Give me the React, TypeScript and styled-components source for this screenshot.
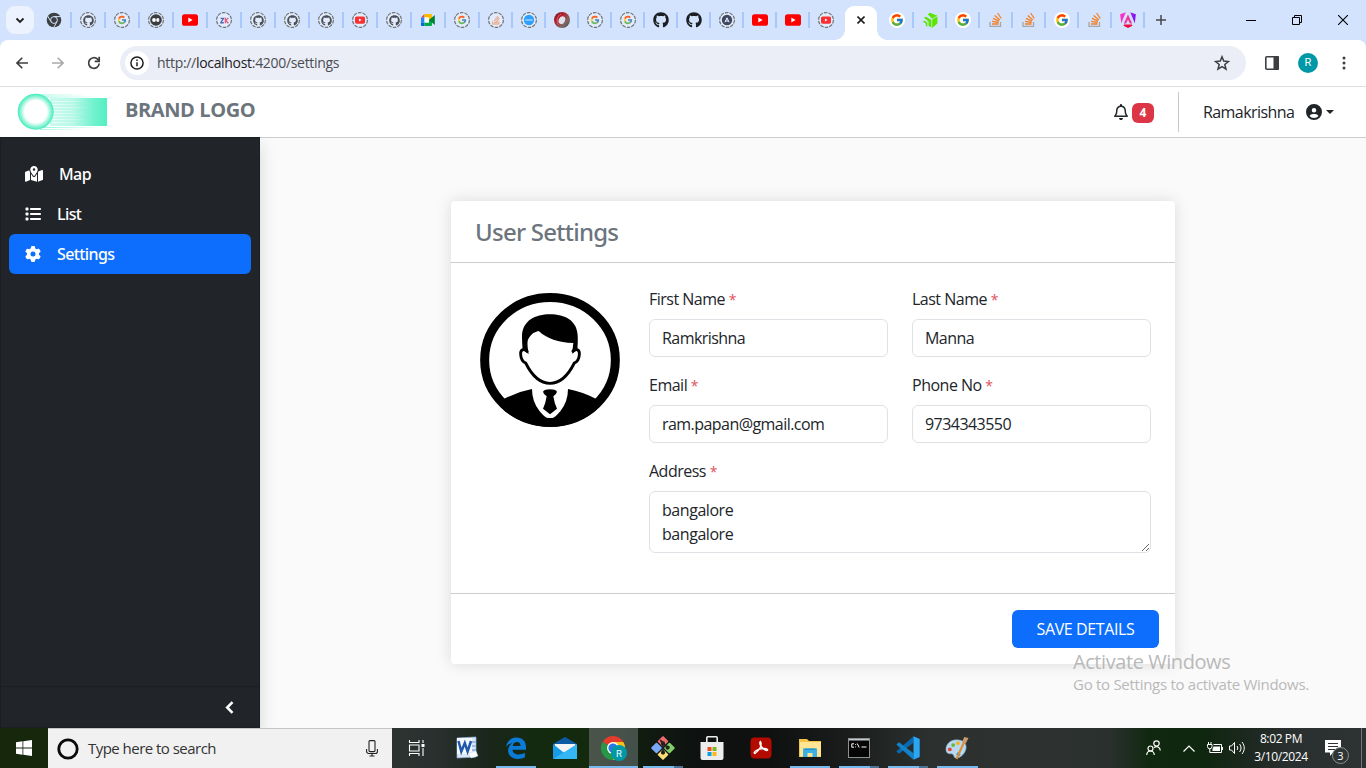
import React from 'react';
import styled, { createGlobalStyle } from 'styled-components';
import {
  FaMapLocationDot, FaList, FaGear, FaRegBell, FaCircleUser,
  FaGithub, FaStackOverflow,
} from 'react-icons/fa6';
import { FcGoogle } from 'react-icons/fc';

const GlobalStyle = createGlobalStyle`
  *, *::before, *::after { box-sizing: border-box; }
  html, body { margin: 0; padding: 0; }
  body {
    width: 1366px; height: 768px; overflow: hidden;
    font-family: "Open Sans", "Noto Sans", sans-serif;
    font-size: 16px; line-height: 24px; color: #212529; background: #fff;
  }
  svg { display: block; flex: none; }
`;

const Screen = styled.div`
  width: 1366px; height: 768px; display: flex; flex-direction: column; overflow: hidden;
`;

/* ---------- browser chrome ---------- */
const TabStrip = styled.div`
  height: 40px; flex: none; display: flex; align-items: center; background: #d3e3fd;
`;
const TabSearch = styled.div`
  width: 28px; height: 28px; margin: 0 4px 0 6px; border-radius: 9px; background: #ecf3fe;
  display: grid; place-items: center;
`;
const Tab = styled.div<{ $w: number; $line?: boolean }>`
  width: ${p => p.$w}px; height: 16px; display: flex; align-items: center; justify-content: center;
  border-right: 2px solid ${p => (p.$line ? '#a8c7fa' : 'transparent')};
`;
const ActiveTab = styled.div`
  width: 32px; height: 34px; margin: 0 4px 0 2px; align-self: flex-end; background: #fff;
  border-radius: 9px 9px 0 0; display: grid; place-items: center; padding-bottom: 6px; position: relative;
  &::before, &::after {
    content: ''; position: absolute; bottom: 0; width: 10px; height: 10px;
  }
  &::before { left: -10px; background: radial-gradient(circle at 0 0, transparent 9.5px, #fff 10px); }
  &::after { right: -10px; background: radial-gradient(circle at 100% 0, transparent 9.5px, #fff 10px); }
`;
const NewTab = styled.div`
  width: 32px; display: grid; place-items: center;
`;
const WindowButtons = styled.div`
  margin-left: auto; display: flex;
  > span { width: 46px; display: grid; place-items: center; }
`;
const ToolbarBack = styled.div`
  height: 47px; flex: none; background: #d3e3fd;
`;
const Toolbar = styled.div`
  height: 47px; background: #fff; border-radius: 8px 8px 0 0; border-bottom: 1px solid #dedfe1;
  display: flex; align-items: center; padding-left: 4px; overflow: hidden;
`;
const ToolButton = styled.div<{ $w?: number }>`
  width: ${p => p.$w ?? 36}px; height: 34px; flex: none; display: grid; place-items: center;
`;
const AddressBar = styled.div`
  width: 1126px; height: 34px; flex: none; margin-left: 8px; border-radius: 17px; background: #ebeef7;
  display: flex; align-items: center; padding: 0 12px 0 5px;
`;
const SiteInfo = styled.div`
  width: 24px; height: 24px; border-radius: 50%; background: #fff; display: grid; place-items: center;
`;
const Url = styled.div`
  margin-left: 8px; flex: 1; font-size: 14px; line-height: 20px; letter-spacing: -0.31px; color: #4a4d52;
  span { color: #202124; }
`;
const Profile = styled.div`
  width: 20px; height: 20px; border-radius: 50%; background: #0097a7; color: #fff;
  font: 11px/20px "Roboto", sans-serif; text-align: center;
`;

/* ---------- page header ---------- */
const Header = styled.header`
  height: 51px; flex: none; background: #fff; border-bottom: 1px solid #ccc;
  display: flex; align-items: center; padding: 0 32px 0 16px;
`;
const Brand = styled.div`
  margin: -4px 0 0 17px; font-size: 20px; font-weight: 700; color: #6c757d; letter-spacing: -0.4px;
`;
const Alerts = styled.div`
  margin-left: auto; display: flex; align-items: center; gap: 3px; padding-right: 24px; height: 40px;
  border-right: 1px solid #c8c8c8;
`;
const Badge = styled.span`
  width: 22px; height: 20px; border-radius: 6px; background: #dc3545; color: #fff; margin-top: 1px;
  font-size: 12px; line-height: 20px; font-weight: 700; text-align: center;
`;
const UserMenu = styled.div`
  display: flex; align-items: center; padding-left: 24px; height: 40px;
  span { width: 103px; letter-spacing: -0.58px; }
`;
const Caret = styled.i`
  margin-left: 4px; border: 4.5px solid transparent; border-top-color: #212529; border-bottom: 0;
`;

/* ---------- sidebar ---------- */
const Body = styled.div`
  height: 590px; flex: none; display: flex; background: #fafafa;
`;
const Sidebar = styled.aside`
  width: 260px; margin-top: -1px; background: #212529; border: 1px solid #1b1e22; color: #fff;
  box-shadow: 0 8px 16px rgba(0,0,0,.15); display: flex; flex-direction: column; z-index: 1;
  clip-path: inset(0 -30px 0 0);
`;
const Nav = styled.nav`
  flex: 1; padding: 16px 8px;
`;
const NavItem = styled.div<{ $active?: boolean; $gap: number }>`
  height: 40px; border-radius: 6px; padding: 0 16px; display: flex; align-items: center; gap: ${p => p.$gap}px;
  font-family: "Noto Sans", "Open Sans", sans-serif; font-weight: 500; letter-spacing: -0.6px;
  background: ${p => (p.$active ? '#0d6efd' : 'transparent')};
`;
const Collapse = styled.div`
  height: 41px; border-top: 1px solid #1a1d21; display: flex; align-items: center; justify-content: flex-end;
  padding-right: 25px;
`;

/* ---------- settings card ---------- */
const Main = styled.main`
  flex: 1; display: flex; justify-content: center; align-items: flex-start; padding-top: 63px;
`;
const Card = styled.section`
  width: 724px; background: #fff; border-radius: 4px; box-shadow: 0 0 16px rgba(0,0,0,.13);
`;
const CardHeader = styled.h4`
  margin: 0; height: 62px; border-bottom: 1px solid #ccc; padding: 0 24px; display: flex; align-items: center;
  font-family: "Noto Sans", "Open Sans", sans-serif; font-size: 24px; font-weight: 500; color: #6c757d;
  letter-spacing: -0.75px;
`;
const CardBody = styled.div`
  padding: 24px 24px 40px 29px; display: flex; gap: 29px;
  > svg { margin-top: 6px; }
`;
const Form = styled.form`
  flex: 1; display: grid; grid-template-columns: 1fr 1fr; gap: 16px 24px;
`;
const Field = styled.label<{ $wide?: boolean }>`
  display: flex; flex-direction: column; gap: 8px; grid-column: ${p => (p.$wide ? '1 / -1' : 'auto')};
  > span { height: 24px; letter-spacing: -0.5px; }
  i { font-style: normal; font-size: 14px; line-height: 1; color: #e0505e; }
`;
const controlStyle = `
  width: 100%; border: 1px solid #dee2e6; border-radius: 6px; background: #fff; padding: 6px 12px;
  font: inherit; color: #212529; outline: none; letter-spacing: -0.55px; display: block;
`;
const Input = styled.input`${controlStyle} height: 38px;`;
const TextArea = styled.textarea`${controlStyle} height: 62px; overflow: hidden; letter-spacing: -0.45px;`;
const CardFooter = styled.div`
  height: 71px; border-top: 1px solid #ccc; padding: 16px; display: flex; justify-content: flex-end;
`;
const SaveButton = styled.button`
  width: 147px; height: 38px; border: 0; border-radius: 6px; background: #0d6efd; color: #fff; padding: 0;
  font: inherit; letter-spacing: -0.38px;
`;

const Watermark = styled.div`
  position: absolute; left: 1073px; top: 649px; color: #b9b9b9; z-index: 5; white-space: nowrap;
`;
const WatermarkTitle = styled.div`font-size: 20px; line-height: 25px; letter-spacing: -0.43px;`;
const WatermarkText = styled.div`font-size: 15px; line-height: 20px; letter-spacing: -0.28px;`;

/* ---------- taskbar ---------- */
const Taskbar = styled.div`
  height: 40px; flex: none; display: flex; color: #fff;
  background: linear-gradient(90deg, #16270c 0, #16270c 48px, #2c3331 392px, #2a302f 435px, #19261a 490px,
    #142a10 540px, #132a0e 590px, #111a10 650px, #0e1110 700px, #0e1110 770px, #1a1d1c 850px, #2c3130 930px,
    #2d3231 1060px, #2a302e 1110px, #10280f 1150px, #0f260f 1205px, #1d2820 1250px, #2a302f 1290px, #2d3232 1366px);
`;
const Start = styled.div`width: 48px; display: grid; place-items: center;`;
const Search = styled.div`
  width: 344px; background: #f1f1f1; border-top: 1px solid #c4c4c4; display: flex; align-items: center;
  padding: 0 14px 0 9px; color: #333; font-size: 15px;
  span { flex: 1; margin: -1px 0 0 9px; letter-spacing: -0.53px; }
`;
const TaskView = styled.div`width: 48px; margin-right: 2px; display: grid; place-items: center;`;
const AppButton = styled.div<{ $on?: boolean }>`
  width: 49.1px; height: 40px; position: relative; display: grid; place-items: center;
  background: ${p => (p.$on ? 'linear-gradient(90deg, #4a544a, #43504a)' : 'transparent')};
`;
const Running = styled.div<{ $kind: 'one' | 'many' | 'full' }>`
  position: absolute; bottom: 0; height: 2px;
  left: ${p => (p.$kind === 'full' ? 0 : 4.5)}px; right: ${p => (p.$kind === 'full' ? 0 : 4.5)}px;
  background: ${p => (p.$kind === 'many' ? 'linear-gradient(90deg, #76b9ed 31px, #4a7394 31px)' : '#76b9ed')};
`;
const Tray = styled.div`
  margin-left: auto; display: flex; align-items: center; padding-right: 4px;
`;
const TrayIcon = styled.div<{ $w: number }>`width: ${p => p.$w}px; display: grid; place-items: center;`;
const Clock = styled.div`
  width: 52px; display: flex; flex-direction: column; align-items: center; white-space: nowrap;
  font-size: 12px; line-height: 18px; letter-spacing: -0.38px;
`;
const ShowDesktop = styled.div`width: 1px; height: 40px; margin-left: 2px; background: #707473;`;
const Notice = styled.div`
  width: 52px; height: 40px; position: relative; display: grid; place-items: center;
`;
const NoticeCount = styled.span`
  position: absolute; left: 25px; top: 19px; width: 17px; height: 17px; border-radius: 50%;
  background: #2f3434; border: 1px solid #8b8f8f; font-size: 11px; line-height: 15px; text-align: center;
`;

/* ---------- favicons ---------- */
type Kind = 'chrome' | 'gh' | 'dgh' | 'dg' | 'ddots' | 'yt' | 'dzk' | 'dyt' | 'meet' | 'dso' | 'dblue'
  | 'red' | 'g' | 'da' | 'green' | 'so' | 'ng';

const YouTube = ({ s = 16 }: { s?: number }) => (
  <svg width={s} height={s} viewBox="0 0 16 16">
    <rect x="0" y="2.2" width="16" height="11.6" rx="2.6" fill="#f00" />
    <path d="M6.3 5.6v4.8L10.6 8z" fill="#fff" />
  </svg>
);
const Ringed = ({ children }: { children: React.ReactNode }) => (
  <RingBox>
    <svg width="16" height="16" viewBox="0 0 16 16">
      <circle cx="8" cy="8" r="7.4" fill="#e3ecfc" stroke="#6f7475" strokeWidth="1.200" strokeDasharray="3.6 1.05" />
    </svg>
    <RingInner>{children}</RingInner>
  </RingBox>
);
const RingBox = styled.div`width: 16px; height: 16px; display: grid; > * { grid-area: 1 / 1; }`;
const RingInner = styled.div`display: grid; place-items: center; opacity: .8;`;
const White = styled.div`
  width: 16px; height: 16px; border-radius: 50%; background: #fff; display: grid; place-items: center;
`;

const Favicon = ({ kind }: { kind: Kind }) => {
  switch (kind) {
    case 'chrome':
      return (
        <svg width="16" height="16" viewBox="0 0 16 16">
          <circle cx="8" cy="8" r="7.3" fill="#3c4043" />
          <g stroke="#d3e3fd" strokeWidth="1" fill="none">
            <circle cx="8" cy="8" r="3.4" />
            <path d="M8 4.6h7M5 9.7L1.6 4M11 9.7L7.6 15.6" />
          </g>
          <circle cx="8" cy="8" r="2.2" fill="#3c4043" />
        </svg>
      );
    case 'gh': return <FaGithub size={16} color="#1b1f24" />;
    case 'dgh': return <Ringed><FaGithub size={11} color="#24292f" /></Ringed>;
    case 'dg': return <Ringed><FcGoogle size={10} /></Ringed>;
    case 'ddots':
      return (
        <Ringed>
          <svg width="12" height="12" viewBox="0 0 12 12">
            <circle cx="6" cy="6" r="5.8" fill="#111" />
            <circle cx="4" cy="6" r="1.9" fill="#fff" /><ellipse cx="7.8" cy="6" rx="1.600" ry="1.900" fill="#fff" />
          </svg>
        </Ringed>
      );
    case 'yt': return <YouTube />;
    case 'dyt': return <Ringed><YouTube s={10} /></Ringed>;
    case 'dzk':
      return (
        <Ringed>
          <svg width="9" height="7" viewBox="0 0 10 8" fill="none" strokeWidth="1.500">
            <path d="M.5 1.500h3.400L.8 6.600h3.400" stroke="#2947a3" />
            <path d="M6 .8v6.400M9.400 1L6.400 4l3 3.200" stroke="#e8365d" />
          </svg>
        </Ringed>
      );
    case 'meet':
      return (
        <svg width="16" height="16" viewBox="0 0 16 16">
          <path d="M1 5.500L4.500 2v3.500z" fill="#ea4335" />
          <path d="M1 5.500h3.500v5H1z" fill="#2684fc" />
          <path d="M1 10.500h3.500V14H2a1 1 0 01-1-1z" fill="#0066da" />
          <path d="M4.500 2h6.500a1 1 0 011 1v4L9 8.500V5.500H4.500z" fill="#ffba00" />
          <path d="M4.500 10.500H9V8l3-1v6a1 1 0 01-1 1H4.500z" fill="#00ac47" />
          <path d="M9 8l5.800-5v10z" fill="#00832d" />
          <path d="M4.500 5.500H9v5H4.500z" fill="#fff" />
        </svg>
      );
    case 'dso': return <Ringed><FaStackOverflow size={10} color="#f0803c" /></Ringed>;
    case 'dblue':
      return (
        <Ringed>
          <svg width="12" height="12" viewBox="0 0 12 12">
            <circle cx="6" cy="6" r="5.200" fill="#008cff" /><path d="M2.200 6h7.600" stroke="#a6d4ff" strokeWidth="1.300" />
          </svg>
        </Ringed>
      );
    case 'red':
      return (
        <svg width="16" height="16" viewBox="0 0 16 16">
          <defs><linearGradient id="redring" x1="0" y1="0" x2="1" y2="1">
            <stop offset="0" stopColor="#5e1420" /><stop offset=".35" stopColor="#b8202f" />
            <stop offset=".7" stopColor="#7d6a66" /><stop offset="1" stopColor="#3d3d3b" />
          </linearGradient></defs>
          <circle cx="8" cy="8" r="8" fill="url(#redring)" />
          <ellipse cx="8" cy="8.200" rx="3.100" ry="4" fill="#dfe3ef" transform="rotate(25 8 8)" />
          <path d="M4.500 12.500C2 9 3 4 7 2" fill="none" stroke="#e0606c" strokeWidth="1" />
        </svg>
      );
    case 'g': return <White><FcGoogle size={14} /></White>;
    case 'da':
      return (
        <Ringed>
          <svg width="12" height="12" viewBox="0 0 12 12">
            <circle cx="6" cy="6" r="5.200" fill="#14203c" />
            <path d="M4 8.200L6 3.800l2 4.400M4.900 7h2.200" fill="none" stroke="#fff" strokeWidth="1" />
          </svg>
        </Ringed>
      );
    case 'green':
      return (
        <svg width="16" height="16" viewBox="0 0 16 16" fill="#5ce500">
          <path d="M5.800 2.200L8 .8l7.400 3v7.800L10.200 16V7.600z" />
          <path d="M1.800 5.800L4 4.800l5.400 3.200v7.600l-3.200-1.800V9.800z" />
          <path d="M.6 9.600l2-.8 3 1.800v4.200l-1.800-1V11.600z" />
          <path d="M5.200 2.600l5 4.600 5.200-3.200M1.800 6.200l4.200 3.200v5" fill="none" stroke="#d3e3fd" strokeWidth=".8" />
        </svg>
      );
    case 'so':
      return (
        <svg width="14" height="16" viewBox="0 0 14 16" fill="none">
          <path d="M1 10v4.300h10.500V10" stroke="#a5a7aa" strokeWidth="1.300" />
          <g stroke="#f48024" strokeWidth="1.300">
            <path d="M3 12h6.500M3.100 9.300l6.500 1.200M4 6.300l6 2.900M5.700 3.600l5.100 4.300M8.600 1l3.700 5.500" />
          </g>
        </svg>
      );
    case 'ng':
      return (
        <svg width="16" height="16" viewBox="0 0 16 16">
          <defs><linearGradient id="nggrad" x1="0" y1="0" x2="1" y2="0">
            <stop offset="0" stopColor="#fb2cc0" /><stop offset=".35" stopColor="#f637d8" /><stop offset="1" stopColor="#6a0dff" />
          </linearGradient></defs>
          <path d="M5.800.3L1.200 11.300.2 2.300zM10.200.3l5.600 2-1 9z" fill="url(#nggrad)" />
          <path d="M8 2.600l4.200 9H9.800L8 7.400 6.200 11.600H3.800z" fill="#f5359f" />
          <path d="M4 12.400h8l.4 1.400L8 16l-4.400-2.200z" fill="#f0063c" />
        </svg>
      );
  }
};

const firstTabs: Kind[] = ['chrome', 'dgh', 'dg', 'ddots', 'yt', 'dzk', 'dgh', 'dgh', 'dgh', 'dyt', 'dgh', 'meet', 'dg'];
const middleTabs: Kind[] = ['dso', 'dblue', 'red', 'dg', 'dg', 'gh', 'gh', 'da', 'yt', 'yt', 'dyt'];
const lastTabs: Kind[] = ['g', 'green', 'g', 'so', 'so', 'g', 'so', 'ng'];

const Browser = () => (
  <>
    <TabStrip>
      <TabSearch>
        <svg width="10" height="7" viewBox="0 0 10 7"><path d="M1.500 1.500L5 5l3.500-3.500" fill="none" stroke="#1f1f1f" strokeWidth="1.800" /></svg>
      </TabSearch>
      {firstTabs.map((k, i) => <Tab key={i} $w={34} $line><Favicon kind={k} /></Tab>)}
      {middleTabs.map((k, i) => <Tab key={i} $w={33} $line={i < 10}><Favicon kind={k} /></Tab>)}
      <ActiveTab>
        <svg width="8" height="8" viewBox="0 0 8 8"><path d="M.5.5l7 7M7.500.5l-7 7" stroke="#1f1f1f" strokeWidth="1.600" /></svg>
      </ActiveTab>
      {lastTabs.map((k, i) => <Tab key={i} $w={33} $line><Favicon kind={k} /></Tab>)}
      <NewTab>
        <svg width="10" height="10" viewBox="0 0 10 10"><path d="M5 0v10M0 5h10" stroke="#474747" strokeWidth="1.500" /></svg>
      </NewTab>
      <WindowButtons>
        <span><svg width="10" height="10" viewBox="0 0 10 10"><path d="M0 5.500h10" stroke="#000" /></svg></span>
        <span><svg width="10" height="10" viewBox="0 0 10 10" fill="none" stroke="#000"><path d="M.5 2.500h7v7h-7zM2.500 2.500v-2h7v7h-2" /></svg></span>
        <span><svg width="10" height="10" viewBox="0 0 10 10"><path d="M0 0l10 10M10 0L0 10" stroke="#000" strokeWidth="1.100" /></svg></span>
      </WindowButtons>
    </TabStrip>
    <ToolbarBack>
      <Toolbar>
        <ToolButton>
          <svg width="12" height="12" viewBox="0 0 12 12" fill="none" stroke="#3c3f41" strokeWidth="1.600"><path d="M12 6H1.200M6.300.7L1 6l5.300 5.300" /></svg>
        </ToolButton>
        <ToolButton>
          <svg width="12" height="12" viewBox="0 0 12 12" fill="none" stroke="#a9a9ab" strokeWidth="1.600"><path d="M0 6h10.800M5.700.7L11 6l-5.300 5.300" /></svg>
        </ToolButton>
        <ToolButton>
          <svg width="14" height="14" viewBox="0 0 14 14" fill="none" stroke="#3c3f41" strokeWidth="1.700"><path d="M12.200 7.500A5.300 5.300 0 1110.600 3.200L12 4.700" /><path d="M12.200.8v4.500H7.700" /></svg>
        </ToolButton>
        <AddressBar>
          <SiteInfo>
            <svg width="14" height="14" viewBox="0 0 14 14" fill="none" stroke="#1f1f1f" strokeWidth="1.500"><circle cx="7" cy="7" r="6.100" /><path d="M7 6.300v4M7 3.500v1.500" /></svg>
          </SiteInfo>
          <Url>http://<span>localhost</span>:4200/settings</Url>
          <ToolButton $w={24}>
            <svg width="16" height="16" viewBox="0 0 16 16" fill="none" stroke="#3c3f41" strokeWidth="1.500"><path d="M8 1.800l1.700 4.300 4.700.4-3.600 3 1.200 4.600L8 11.600l-4 2.500 1.200-4.600-3.600-3 4.700-.4z" /></svg>
          </ToolButton>
        </AddressBar>
        <ToolButton $w={52}>
          <svg width="14" height="14" viewBox="0 0 14 14"><rect x=".8" y=".8" width="12.400" height="12.400" rx="1" fill="none" stroke="#3c3f41" strokeWidth="1.600" /><path d="M8.500 0H13a1 1 0 011 1v12a1 1 0 01-1 1H8.500z" fill="#3c3f41" /></svg>
        </ToolButton>
        <ToolButton $w={20}><Profile>R</Profile></ToolButton>
        <ToolButton $w={52}>
          <svg width="4" height="14" viewBox="0 0 4 14" fill="#3c3f41"><circle cx="2" cy="2" r="1.500" /><circle cx="2" cy="7" r="1.500" /><circle cx="2" cy="12" r="1.500" /></svg>
        </ToolButton>
      </Toolbar>
    </ToolbarBack>
  </>
);

const Logo = () => (
  <svg width="92" height="38" viewBox="0 0 92 38">
    <defs>
      <linearGradient id="trail" x1="0" x2="1" y1="0" y2="0">
        <stop offset="0" stopColor="#52efc3" stopOpacity=".3" /><stop offset=".4" stopColor="#52efc3" stopOpacity=".42" />
        <stop offset=".75" stopColor="#52efc3" stopOpacity=".8" /><stop offset="1" stopColor="#52efc3" />
      </linearGradient>
      <linearGradient id="streak" x1="0" x2="1" y1="0" y2="0">
        <stop offset="0" stopColor="#52efc3" stopOpacity=".6" /><stop offset="1" stopColor="#52efc3" stopOpacity="0" />
      </linearGradient>
      <linearGradient id="gap" x1="0" x2="1" y1="0" y2="0">
        <stop offset="0" stopColor="#fff" stopOpacity=".7" /><stop offset="1" stopColor="#fff" stopOpacity="0" />
      </linearGradient>
      <radialGradient id="ring">
        <stop offset=".62" stopColor="#fff" /><stop offset=".8" stopColor="#a4f5dd" /><stop offset=".97" stopColor="#4beebf" />
      </radialGradient>
    </defs>
    <rect x="34" y="5" width="57" height="28" fill="url(#trail)" />
    <g fill="url(#streak)">
      <rect x="24" y="1.500" width="50" height="1" /><rect x="28" y="3.500" width="60" height="1" />
      <rect x="26" y="34" width="60" height="1" /><rect x="24" y="36" width="46" height=".8" />
    </g>
    <g fill="url(#gap)">
      <rect x="36" y="8" width="36" height="1" /><rect x="36" y="11" width="30" height="1" />
      <rect x="36" y="14" width="38" height="1" /><rect x="36" y="17" width="26" height="1" />
      <rect x="36" y="20" width="34" height="1" /><rect x="36" y="23" width="30" height="1" />
      <rect x="36" y="26" width="36" height="1" /><rect x="36" y="29" width="30" height="1" />
    </g>
    <circle cx="19.700" cy="18.700" r="18" fill="url(#ring)" />
  </svg>
);

const Avatar = () => (
  <svg width="140" height="134" viewBox="120 309 420 402">
    <defs><clipPath id="disc"><ellipse cx="330" cy="510" rx="209" ry="200" /></clipPath></defs>
    <ellipse cx="330" cy="510" rx="196" ry="187.500" fill="#fff" stroke="#000" strokeWidth="27" />
    <path clipPath="url(#disc)" d="M190 628Q232 605 276 597Q276 635 299 664Q318 687 330 687Q342 687 361 664Q384 635 384 597Q428 605 470 628V711H190Z" />
    <path d="M309 605Q314 598 330 598Q346 598 351 605Q349 614 340 619Q343 640 351 656L330 673L309 656Q317 640 320 619Q311 614 309 605Z" />
    <path d="M263 486C256 474 240 477 242 494C243 508 249 516 257 519C274 553 297 580 330 580C363 580 386 553 403 519C411 516 417 508 418 494C420 477 404 474 397 486" fill="none" stroke="#000" strokeWidth="8.500" />
    <path d="M248 480C247 466 246 452 246 436C249 392 285 373 330 373C375 373 411 392 413 436C414 452 413 466 412 480L396 491L400 459C355 458 321 446 296 423C281 425 268 438 263 452C261 464 264 478 266 492Z" />
  </svg>
);

/* ---------- taskbar drawings ---------- */
const WordIcon = () => (
  <svg width="24" height="24" viewBox="0 0 24 24">
    <path d="M2 2L21 1v20L2 22z" fill="#dce8f8" stroke="#8fb0df" strokeWidth=".7" />
    <path d="M17 5h4v2h-4zM17 9h4v2h-4zM17 13h4v2h-4z" fill="#9dbbe6" /><path d="M2 2h15v16H2z" fill="#f4f8fd" />
    <path d="M3.500 5l2.800 10.500L9.800 7l2.800 8.500L16 5" fill="none" stroke="#1f5aad" strokeWidth="2.500" />
    <path d="M13.500 17.500l7.500-2.500 2 5-7 2z" fill="#fff" stroke="#b9cdea" strokeWidth=".4" />
  </svg>
);
const EdgeIcon = () => (
  <svg width="22" height="22" viewBox="0 0 22 22">
    <path d="M1 9.700C2.200 3.800 6.500.6 11.500.6c6 0 9.500 4.200 9.500 9.300v2.800H7.500c.2 3.300 3 4.700 6.200 4.700 2.300 0 4.300-.6 6.200-1.700v4.600c-2 1.100-4.600 1.600-7.200 1.600-5.600 0-9.600-3.300-9.600-8.300 0-3.200 1.600-6 4.600-7.600C5.400 6.500 2.800 7.400 1 9.700zm6.700-.7h7.800c.2-2.500-1.200-4-3.600-4-2.200 0-3.800 1.500-4.200 4z" fill="#0b7bd8" />
  </svg>
);
const MailIcon = () => (
  <svg width="24" height="22" viewBox="0 0 24 22">
    <path d="M0 7L12 0l12 7v3H0z" fill="#0d5ba5" /><path d="M2 7h20v9H2z" fill="#f2f5f7" />
    <path d="M0 7l12 9.500L0 22z" fill="#1a9be8" /><path d="M24 7v15H0z" fill="#35b6f4" />
    <path d="M1 7h22l-11 7.500z" fill="#f4f4f4" />
  </svg>
);
const ChromeIcon = () => (
  <svg width="26" height="25" viewBox="0 0 26 25">
    <path d="M12 12L1.600 6A12 12 0 0122.400 6z" fill="#e33b2e" /><path d="M12 12L1.600 6A12 12 0 0012 24l5-9z" fill="#279847" />
    <path d="M12 12l10.400-6A12 12 0 0112 24l5.200-9z" fill="#fbc116" /><path d="M12 6h10.400l-5 6z" fill="#fbc116" />
    <circle cx="12" cy="12" r="6" fill="#fff" /><circle cx="12" cy="12" r="4.600" fill="#2a78e4" />
    <circle cx="18" cy="17" r="8" fill="#0097a7" />
    <text x="18" y="20.600" textAnchor="middle" fontFamily="Roboto" fontSize="9.500" fill="#fff">R</text>
  </svg>
);
const GitIcon = () => (
  <svg width="24" height="24" viewBox="0 0 26 26">
    <rect x="8.700" y="1.500" width="8.600" height="8.600" rx="1" transform="rotate(45 13 5.800)" fill="#f06a6c" />
    <rect x="1.700" y="8.700" width="8.600" height="8.600" rx="1" transform="rotate(45 6 13)" fill="#7aa9f7" />
    <rect x="15.700" y="8.700" width="8.600" height="8.600" rx="1" transform="rotate(45 20 13)" fill="#80cf68" />
    <rect x="8.700" y="15.900" width="8.600" height="8.600" rx="1" transform="rotate(45 13 20.200)" fill="#fbdf74" />
    <g stroke="#222" strokeWidth="1.800" fill="#222"><path d="M13 7v12M10 4.500l3 3 5 5" fill="none" /><circle cx="13" cy="8" r="1.400" /><circle cx="18" cy="12.500" r="1.400" /><circle cx="13" cy="18" r="1.400" /></g>
  </svg>
);
const StoreIcon = () => (
  <svg width="24" height="26" viewBox="0 0 24 26">
    <path d="M6.800 9V2.800a1 1 0 011-1h8.400a1 1 0 011 1V9" fill="none" stroke="#eee" strokeWidth="1.600" />
    <path d="M.5 7h23v16a2 2 0 01-2 2h-19a2 2 0 01-2-2z" fill="#ededed" />
    <path d="M7.500 12h4v4h-4z" fill="#f04e23" /><path d="M12.500 12h4v4h-4z" fill="#7db61c" />
    <path d="M7.500 17h4v4h-4z" fill="#069fe0" /><path d="M12.500 17h4v4h-4z" fill="#fdb813" />
  </svg>
);
const AcrobatIcon = () => (
  <svg width="22" height="22" viewBox="0 0 22 22">
    <rect x=".5" y=".5" width="21" height="21" rx="4" fill="#b30b00" />
    <path d="M10.500 4.500c2 3-1 9-5.500 12-1.500 0-1-2 2-3.500 4-1.800 9-2 10.500-.5.800 1.500-1.500 1.500-4-.5-2.500-2.200-4-5-3.600-7z" fill="none" stroke="#fff" strokeWidth="1.300" />
  </svg>
);
const ExplorerIcon = () => (
  <svg width="22" height="20" viewBox="0 0 22 20">
    <path d="M0 1h8l2 2h12v16H0z" fill="#f5c344" /><path d="M1 4h21v14.500H1z" fill="#ffe594" />
    <path d="M4 19v-8.500h14V19h-4.500v-4h-5v4z" fill="#3ab0e6" /><path d="M5.500 10.500h11v1.500h-11z" fill="#2293cd" />
  </svg>
);
const CmdIcon = () => (
  <svg width="22" height="20" viewBox="0 0 22 20">
    <rect x=".5" y=".5" width="21" height="19" fill="#050505" stroke="#8d9194" /><path d="M1 1h20v1.500H1z" fill="#c3c8cc" />
    <path d="M6 5.800H3.800v3.400H6M7.600 6v.8M7.600 8.500v.8M9.200 5.500l2 4M13.500 9h5" fill="none" stroke="#fff" strokeWidth="1" />
  </svg>
);
const CodeIcon = () => (
  <svg width="24" height="24" viewBox="0 0 24 24">
    <path d="M17.500.3v6.400L3 17.800.3 15.500z" fill="#0a69ae" /><path d="M17.500 23.700v-6.400L3 6.200.3 8.500z" fill="#1283ca" />
    <path d="M17.500.3L23.700 3v18l-6.200 2.700z" fill="#2aa6f2" />
  </svg>
);
const PaintIcon = () => (
  <svg width="24" height="24" viewBox="0 0 25 25">
    <path d="M12 4C5 4 1 9 1 14c0 3 2 5 5 4.500 2-.3 3 1 3.500 3 .8 2.500 6 1.500 9-2C22 16 23 11 21 8c-2-3-5-4-9-4z" fill="#b9d9ee" stroke="#7fa9c7" strokeWidth=".6" />
    <circle cx="5" cy="14" r="2" fill="#e64237" /><circle cx="8.500" cy="9.500" r="2" fill="#6cb73b" />
    <circle cx="13.500" cy="7.500" r="2" fill="#f0b52a" /><circle cx="14" cy="19" r="2" fill="#3d7fd6" />
    <path d="M12 24L20 6" stroke="#dd8f34" strokeWidth="2.200" /><path d="M18 6l2-5 4.500 1-3 6z" fill="#c99a6a" />
  </svg>
);

const apps: { icon: React.ReactNode; run?: 'one' | 'many' | 'full' }[] = [
  { icon: <WordIcon /> }, { icon: <EdgeIcon />, run: 'one' }, { icon: <MailIcon /> },
  { icon: <ChromeIcon />, run: 'full' }, { icon: <GitIcon />, run: 'many' }, { icon: <StoreIcon /> },
  { icon: <AcrobatIcon /> }, { icon: <ExplorerIcon />, run: 'one' }, { icon: <CmdIcon />, run: 'many' },
  { icon: <CodeIcon />, run: 'many' }, { icon: <PaintIcon />, run: 'one' },
];

const WindowsTaskbar = () => (
  <Taskbar>
    <Start>
      <svg width="16" height="16" viewBox="0 0 16 16" fill="#fff"><path d="M0 2.200L6.500 1.300v6.300H0zM7.300 1.200L16 0v7.600H7.300zM0 8.400h6.500v6.300L0 13.800zM7.300 8.400H16V16l-8.700-1.200z" /></svg>
    </Start>
    <Search>
      <svg width="22" height="22" viewBox="0 0 22 22"><circle cx="11" cy="11" r="9.200" fill="none" stroke="#0a0a0a" strokeWidth="2.800" /></svg>
      <span>Type here to search</span>
      <svg width="12" height="17" viewBox="0 0 12 17" fill="none" stroke="#222" strokeWidth="1.100"><rect x="3" y=".6" width="6" height="11" rx="1" /><path d="M.6 9v2.500a2 2 0 002 2h6.800a2 2 0 002-2V9M6 13.500V16M3.500 16h5" /></svg>
    </Search>
    <TaskView>
      <svg width="17" height="16" viewBox="0 0 17 16" fill="none" stroke="#fff" strokeWidth="1.100"><path d="M1.500 0v2.500h9.500V0M1.500 16v-2.500h9.500V16M1.500 5h9.500v6H1.500zM15 0v3M15 8v8" /><path d="M13.500 4h3v3h-3z" fill="#fff" stroke="none" /></svg>
    </TaskView>
    {apps.map((a, i) => (
      <AppButton key={i} $on={a.run === 'full'}>{a.icon}{a.run && <Running $kind={a.run} />}</AppButton>
    ))}
    <Tray>
      <TrayIcon $w={36}>
        <svg width="15" height="16" viewBox="0 0 15 16" fill="none" stroke="#fff" strokeWidth="1.200"><circle cx="10.500" cy="3.500" r="2.700" /><circle cx="4.500" cy="8.500" r="2.500" /><path d="M.7 15c.2-2.500 1.700-4 3.800-4s3.600 1.500 3.800 4M8 7.500c3-2 6-.5 6.300 3" /></svg>
      </TrayIcon>
      <TrayIcon $w={36}>
        <svg width="12" height="7" viewBox="0 0 12 7"><path d="M.5 6.500L6 1l5.500 5.500" fill="none" stroke="#fff" strokeWidth="1.200" /></svg>
      </TrayIcon>
      <TrayIcon $w={12}>
        <svg width="16" height="12" viewBox="0 0 16 12" fill="none" stroke="#fff" strokeWidth="1"><path d="M1.500 0v2.500M4 0v2.500M.5 2.500h4.500v2a2.200 2.200 0 01-4.500 0zM2.800 6.500v4h2.200M6.500 2.500h8v8H5M15.500 5v3" /><path d="M6.500 4.500h6.500v4.500H5.500V7z" fill="#fff" stroke="none" /></svg>
      </TrayIcon>
      <TrayIcon $w={36}>
        <svg width="16" height="14" viewBox="0 0 16 14" fill="none" stroke="#fff" strokeWidth="1"><path d="M.5 5h2l3-3.500v11L2.500 9h-2zM8 5c1 1.300 1 2.700 0 4M10.500 3c2 2.500 2 5.500 0 8M13 1c3 3.800 3 8.200 0 12" /></svg>
      </TrayIcon>
      <Clock><span>8:02 PM</span><span>3/10/2024</span></Clock>
      <Notice>
        <svg width="16" height="16" viewBox="0 0 16 16"><path d="M0 0h16v12.500H8L5 16v-3.500H0z" fill="#fff" /><path d="M3 3.500h10M3 6.500h10M3 9.500h7" stroke="#2d3232" strokeWidth="1" /></svg>
        <NoticeCount>3</NoticeCount>
      </Notice>
      <ShowDesktop />
    </Tray>
  </Taskbar>
);

const Required = ({ children }: { children: string }) => <span>{children} <i>*</i></span>;

export default function App() {
  return (
    <>
      <GlobalStyle />
      <Screen>
        <Browser />
        <Header>
          <Logo />
          <Brand>BRAND LOGO</Brand>
          <Alerts><FaRegBell size={16} /><Badge>4</Badge></Alerts>
          <UserMenu><span>Ramakrishna</span><FaCircleUser size={16} /><Caret /></UserMenu>
        </Header>
        <Body>
          <Sidebar>
            <Nav>
              <NavItem $gap={16}><FaMapLocationDot size={18} />Map</NavItem>
              <NavItem $gap={16}><FaList size={16} />List</NavItem>
              <NavItem $gap={16} $active><FaGear size={16} />Settings</NavItem>
            </Nav>
            <Collapse>
              <svg width="9" height="13" viewBox="0 0 9 13"><path d="M7.500 1.200L2.200 6.500l5.300 5.300" fill="none" stroke="#fff" strokeWidth="2.600" /></svg>
            </Collapse>
          </Sidebar>
          <Main>
            <Card>
              <CardHeader>User Settings</CardHeader>
              <CardBody>
                <Avatar />
                <Form>
                  <Field><Required>First Name</Required><Input defaultValue="Ramkrishna" /></Field>
                  <Field><Required>Last Name</Required><Input defaultValue="Manna" /></Field>
                  <Field><Required>Email</Required><Input defaultValue="ram.papan@gmail.com" /></Field>
                  <Field><Required>Phone No</Required><Input defaultValue="9734343550" /></Field>
                  <Field $wide><Required>Address</Required><TextArea defaultValue={'bangalore\nbangalore'} /></Field>
                </Form>
              </CardBody>
              <CardFooter><SaveButton type="button">SAVE DETAILS</SaveButton></CardFooter>
            </Card>
          </Main>
        </Body>
        <Watermark>
          <WatermarkTitle>Activate Windows</WatermarkTitle>
          <WatermarkText>Go to Settings to activate Windows.</WatermarkText>
        </Watermark>
        <WindowsTaskbar />
      </Screen>
    </>
  );
}
